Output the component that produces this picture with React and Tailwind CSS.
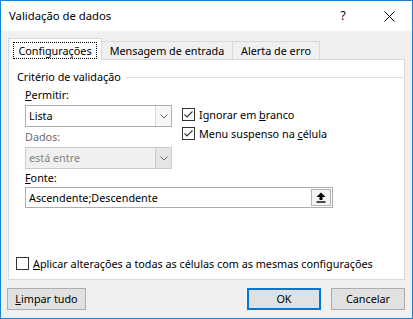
import React from 'react'

const font = { fontFamily: '"Noto Sans", "Open Sans", sans-serif' }

function Check({ checked }) {
  return (
    <span className="w-[13px] h-[13px] border border-[#333333] bg-white flex items-center justify-center shrink-0">
      {checked && (
        <svg width="11" height="11" viewBox="0 0 11 11">
          <path d="M1.5 5.5 L4 8 L9.5 2.5" fill="none" stroke="#333333" strokeWidth="1.1" />
        </svg>
      )}
    </span>
  )
}

function Chevron({ color = '#606060' }) {
  return (
    <svg width="8" height="5" viewBox="0 0 8 5">
      <path d="M0.5 0.5 L4 4 L7.5 0.5" fill="none" stroke={color} strokeWidth="1" />
    </svg>
  )
}

function Select({ value, disabled }) {
  return (
    <div className={`h-[22px] flex border ${disabled ? 'border-[#cccccc] bg-[#f0f0f0] text-[#838383]' : 'border-[#adadad] bg-white text-black'}`}>
      <span className="flex-1 pl-[3px] leading-[20px]">{value}</span>
      <span className={`w-[16px] flex items-center justify-center border-l ${disabled ? 'border-[#cccccc] bg-[#e5e5e5]' : 'border-[#dadada] bg-[#f7f7f7]'}`}>
        <Chevron color={disabled ? '#707070' : '#606060'} />
      </span>
    </div>
  )
}

function Button({ children, primary, className = '' }) {
  return (
    <button className={`h-[22px] bg-[#e1e1e1] flex items-center justify-center text-black ${primary ? 'border-2 border-[#0078d7]' : 'border border-[#adadad]'} ${className}`}>
      {children}
    </button>
  )
}

export default function App() {
  return (
    <div style={font} className="w-[413px] h-[319px] border border-[#1883d7] bg-[#f0f0f0] flex flex-col text-[10.8px] leading-[16px] text-black select-none">
      {/* Title bar */}
      <div className="h-[30px] bg-white flex items-center shrink-0">
        <span className="pl-[8px] text-[11.3px]">Validação de dados</span>
        <span className="ml-auto w-[46px] text-center text-[12px]">?</span>
        <span className="w-[46px] flex items-center justify-center">
          <svg width="11" height="11" viewBox="0 0 11 11">
            <path d="M0.5 0.5 L10.5 10.5 M10.5 0.5 L0.5 10.5" stroke="#000" strokeWidth="1" />
          </svg>
        </span>
      </div>

      {/* Tabs */}
      <div className="mt-[7px] ml-[7px] flex items-end h-[22px] relative z-10">
        <div className="w-[94px] h-[22px] bg-white border-l border-t border-r border-[#d9d9d9] flex items-center justify-center">
          <span className="border border-dotted border-black px-[4px] h-[17px] leading-[15px] mt-[2px]">Configurações</span>
        </div>
        <div className="w-[131px] h-[18px] mb-[1px] border-t border-r border-[#d9d9d9] flex items-center justify-center">
          Mensagem de entrada
        </div>
        <div className="w-[87px] h-[18px] mb-[1px] border-t border-r border-[#d9d9d9] flex items-center justify-center">
          Alerta de erro
        </div>
      </div>

      {/* Panel */}
      <div className="-mt-px ml-[7px] w-[397px] h-[221px] bg-white border border-[#d9d9d9] flex flex-col">
        <div className="mt-[9px] pl-[8px] h-[16px] flex items-center">
          <span>Critério de validação</span>
          <span className="flex-1 h-px bg-[#dcdcdc] ml-[5px] mr-[1px]" />
        </div>

        <div className="mt-[2px] pl-[16px] flex">
          <div className="w-[147px] flex flex-col">
            <span className="h-[16px]"><u>P</u>ermitir:</span>
            <div className="mt-[2px]"><Select value="Lista" /></div>
            <span className="mt-[2px] h-[16px] text-[#6d6d6d]">Dados:</span>
            <div className="mt-[2px]"><Select value="está entre" disabled /></div>
          </div>
          <div className="ml-[10px] mt-[21px] flex flex-col gap-[6px]">
            <label className="h-[13px] flex items-center gap-[4px]">
              <Check checked />
              <span>Ignorar em <u>b</u>ranco</span>
            </label>
            <label className="h-[13px] flex items-center gap-[4px]">
              <Check checked />
              <span>Menu suspenso na <u>c</u>élula</span>
            </label>
          </div>
        </div>

        <span className="mt-[1px] ml-[16px] h-[16px]"><u>F</u>onte:</span>
        <div className="mt-[1px] ml-[16px] w-[308px] h-[21px] border border-[#adadad] flex">
          <span className="flex-1 pl-[3px] leading-[19px]">Ascendente;Descendente</span>
          <span className="w-[20px] m-px bg-[#f5f5f5] border border-[#b4b4b4] flex items-center justify-center">
            <svg width="10" height="11" viewBox="0 0 10 11">
              <path d="M5 0.5 L9.5 5 L6.5 5 L6.5 8 L3.5 8 L3.5 5 L0.5 5 Z" fill="#000" />
              <path d="M0.5 10 L9.5 10" stroke="#000" strokeWidth="1.4" />
            </svg>
          </span>
        </div>

        <label className="mt-auto mb-[9px] ml-[7px] h-[13px] flex items-center gap-[4px]">
          <Check />
          <span><u>A</u>plicar alterações a todas as células com as mesmas configurações</span>
        </label>
      </div>

      {/* Buttons */}
      <div className="mt-[8px] px-[6px] flex">
        <Button className="w-[79px]"><u>L</u>impar tudo</Button>
        <Button primary className="ml-auto w-[74px]">OK</Button>
        <Button className="ml-[10px] mr-px w-[74px]">Cancelar</Button>
      </div>
    </div>
  )
}
